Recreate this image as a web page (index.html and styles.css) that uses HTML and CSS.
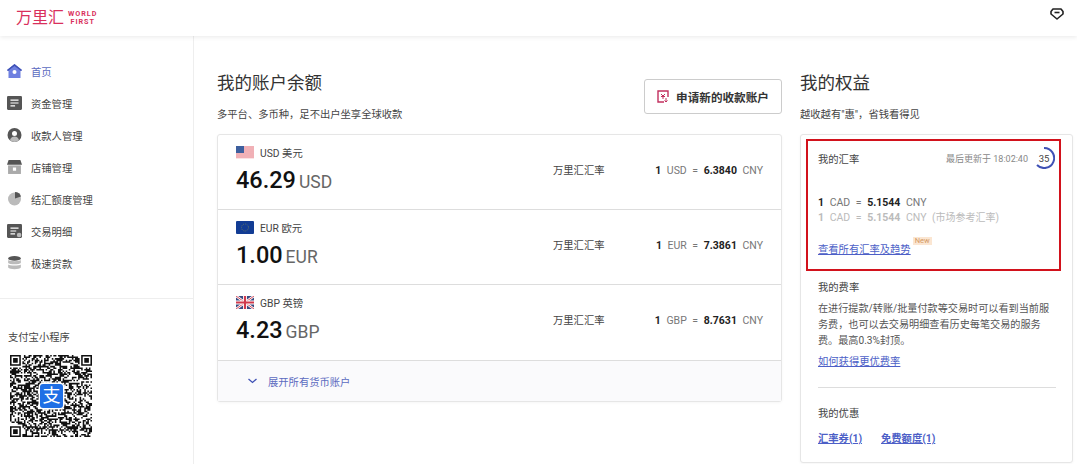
FILE: index.html
```html
<!DOCTYPE html>
<html lang="zh-CN">

<head>
    <meta charset="UTF-8">
    <meta name="viewport" content="width=device-width, initial-scale=1.0">
    <title>万里汇 WorldFirst</title>
    <link rel="stylesheet" href="styles.css">
</head>

<body>
    <header class="topbar">
        <div class="logo">
            <span class="logo-cn">万里汇</span>
            <span class="logo-en">WORLD<br>FIRST</span>
        </div>
        <svg class="gem" width="14" height="12" viewBox="0 0 14 12" fill="none" stroke="#222" stroke-width="1.600">
            <path d="M3 1h8l2 2.500v2.500l-6 5-6-5v-2.500z" stroke-linejoin="round" />
            <path d="M4.500 4.500h5" />
        </svg>
    </header>

    <div class="layout">
        <aside class="sidebar">
            <nav class="nav">
                <a class="nav-item active">
                    <svg width="15" height="14" viewBox="0 0 15 14">
                        <path d="M7.500 0l7.500 6-1 1-.5-.4v7.400h-12v-7.400l-.5.400-1-1z" fill="#6f80e0" />
                        <path d="M7.500 0l7.500 6-1 1-6.500-5-6.500 5-1-1z" fill="#3f51b5" />
                        <circle cx="7.500" cy="8" r="2" fill="#fff" />
                    </svg>
                    首页
                </a>
                <a class="nav-item">
                    <svg width="15" height="14" viewBox="0 0 13 12">
                        <rect width="13" height="12" rx="1" fill="#555" />
                        <path d="M3 3.500h7M3 6h7M3 8.500h4" stroke="#fff" stroke-width="1" />
                    </svg>
                    资金管理
                </a>
                <a class="nav-item">
                    <svg width="15" height="14" viewBox="0 0 14 14">
                        <circle cx="7" cy="7" r="7" fill="#555" />
                        <circle cx="7" cy="5.500" r="2.500" fill="#fff" />
                        <path d="M2.500 12c.8-2.500 2.500-3.500 4.500-3.500s3.700 1 4.500 3.500c-1.200 1.300-2.800 2-4.500 2s-3.300-.7-4.500-2z" fill="#bbb" />
                    </svg>
                    收款人管理
                </a>
                <a class="nav-item">
                    <svg width="15" height="14" viewBox="0 0 14 13">
                        <path d="M1.500 0h11l1.500 4.500h-14z" fill="#555" />
                        <rect x="1" y="5" width="12" height="8" fill="#aaa" />
                        <rect x="5.500" y="7" width="3" height="3" fill="#fff" />
                    </svg>
                    店铺管理
                </a>
                <a class="nav-item">
                    <svg width="15" height="14" viewBox="0 0 14 14">
                        <circle cx="7" cy="7" r="6.500" fill="#bbb" />
                        <path d="M7.500 6.500v-6.500c3 0 5.500 2 6 4.500z" fill="#555" />
                    </svg>
                    结汇额度管理
                </a>
                <a class="nav-item">
                    <svg width="15" height="14" viewBox="0 0 13 12">
                        <rect width="13" height="12" rx="1" fill="#555" />
                        <path d="M3 3.500h7M3 6h5M3 8.500h4" stroke="#fff" stroke-width="1" />
                        <circle cx="10.500" cy="9.500" r="2" fill="#bbb" />
                    </svg>
                    交易明细
                </a>
                <a class="nav-item">
                    <svg width="15" height="14" viewBox="0 0 13 12">
                        <ellipse cx="6.500" cy="2" rx="5.500" ry="2" fill="#555" />
                        <path d="M1 3.500c1 1.300 10 1.300 11 0v2.500c-1 1.500-10 1.500-11 0z" fill="#bbb" />
                        <path d="M1 7.200c1 1.300 10 1.300 11 0v2.800c-1 2-10 2-11 0z" fill="#bbb" />
                    </svg>
                    极速贷款
                </a>
            </nav>
            <div class="mini">
                <p class="mini-title">支付宝小程序</p>
                <div class="qr">
                    <svg id="qr-code" width="82" height="82" viewBox="0 0 53 53"></svg>
                    <span class="qr-logo">支</span>
                </div>
            </div>
        </aside>

        <main class="content">
            <section class="accounts">
                <div class="accounts-head">
                    <div>
                        <h2>我的账户余额</h2>
                        <p class="sub">多平台、多币种，足不出户坐享全球收款</p>
                    </div>
                    <button type="button" class="apply">
                        <svg width="12" height="13" viewBox="0 0 12 13" fill="none" stroke="#c2305f" stroke-width="1.400">
                            <path d="M11 7v-6h-10v11h6" />
                            <path d="M4 4l2 2 2-2M4 6.500h4M6 6v3" stroke-width="1" />
                            <path d="M9 8v4M7.500 10.500l1.500 1.500 1.500-1.500" stroke-width="1" />
                        </svg>
                        申请新的收款账户
                    </button>
                </div>

                <div class="card balances">
                    <div class="balance">
                        <div>
                            <div class="currency">
                                <svg class="flag" viewBox="0 0 18 13">
                                    <rect width="18" height="13" fill="#fbe3e4" />
                                    <path d="M0 1h18M0 3h18M0 5h18M0 7h18M0 9h18M0 11h18" stroke="#e67f88" stroke-width="1" />
                                    <rect width="8" height="7" fill="#3d5f9e" />
                                </svg>
                                USD 美元
                            </div>
                            <div class="amount">46.29<small>USD</small></div>
                        </div>
                        <span class="rate-name">万里汇汇率</span>
                        <span class="rate"><b>1</b> USD = <b>6.3840</b> CNY</span>
                    </div>
                    <div class="balance">
                        <div>
                            <div class="currency">
                                <svg class="flag" viewBox="0 0 18 13">
                                    <rect width="18" height="13" rx="1" fill="#123c94" />
                                    <circle cx="9" cy="6.500" r="3.500" fill="none" stroke="#6f7f5a" stroke-width=".8" stroke-dasharray="1 1" />
                                </svg>
                                EUR 欧元
                            </div>
                            <div class="amount">1.00<small>EUR</small></div>
                        </div>
                        <span class="rate-name">万里汇汇率</span>
                        <span class="rate"><b>1</b> EUR = <b>7.3861</b> CNY</span>
                    </div>
                    <div class="balance last">
                        <div>
                            <div class="currency">
                                <svg class="flag" viewBox="0 0 18 13">
                                    <rect width="18" height="13" fill="#3a4a80" />
                                    <path d="M0 0l18 13M18 0l-18 13" stroke="#fff" stroke-width="2.500" />
                                    <path d="M0 0l18 13M18 0l-18 13" stroke="#d8505f" stroke-width="1" />
                                    <path d="M9 0v13M0 6.500h18" stroke="#fff" stroke-width="4" />
                                    <path d="M9 0v13M0 6.500h18" stroke="#d03a4c" stroke-width="2.200" />
                                </svg>
                                GBP 英镑
                            </div>
                            <div class="amount">4.23<small>GBP</small></div>
                        </div>
                        <span class="rate-name">万里汇汇率</span>
                        <span class="rate"><b>1</b> GBP = <b>8.7631</b> CNY</span>
                    </div>
                    <a class="expand">
                        <svg width="9" height="6" viewBox="0 0 9 6" fill="none" stroke="#3f51b5" stroke-width="1.300">
                            <path d="M.5 1l4 3.500 4-3.500" />
                        </svg>
                        展开所有货币账户
                    </a>
                </div>
            </section>

            <section class="benefits">
                <h2>我的权益</h2>
                <p class="sub">越收越有"惠"，省钱看得见</p>

                <div class="card perks">
                    <div class="my-rate">
                        <div class="my-rate-head">
                            <span>我的汇率</span>
                            <span class="updated">最后更新于 18:02:40</span>
                            <span class="timer">
                                <svg width="22" height="22" viewBox="0 0 22 22" fill="none" stroke="#3f51b5" stroke-width="2">
                                    <path d="M11 1a10 10 0 1 1 -7 17" />
                                </svg>
                                35
                            </span>
                        </div>
                        <div class="rate-lines">
                            <div class="rate"><b>1</b> CAD = <b>5.1544</b> CNY</div>
                            <div class="rate market"><b>1</b> CAD = <b>5.1544</b> CNY <span class="note">(市场参考汇率)</span></div>
                        </div>
                        <div class="trend">
                            <a class="link">查看所有汇率及趋势</a>
                            <span class="badge">New</span>
                        </div>
                    </div>

                    <div class="perk-block fees">
                        <h3>我的费率</h3>
                        <p>在进行提款/转账/批量付款等交易时可以看到当前服务费，也可以去交易明细查看历史每笔交易的服务费。最高0.3%封顶。</p>
                        <a class="link">如何获得更优费率</a>
                    </div>

                    <div class="perk-block offers">
                        <h3>我的优惠</h3>
                        <div class="offer-links">
                            <a class="link strong">汇率券(1)</a>
                            <a class="link strong">免费额度(1)</a>
                        </div>
                    </div>
                </div>
            </section>
        </main>
    </div>

    <script src="script.js"></script>
</body>

</html>
```

FILE: styles.css
```css
* {
    box-sizing: border-box;
}

body {
    margin: 0;
    height: 464px;
    overflow: hidden;
    background-color: #fff;
    color: #444;
    font-family: Roboto, "Noto Sans CJK SC", sans-serif;
    font-size: 10.3px;
}

h2,
h3,
p {
    margin: 0;
    font-weight: 400;
}

.topbar {
    position: relative;
    height: 36px;
    padding: 0 13px 0 16px;
    display: flex;
    justify-content: space-between;
    align-items: center;
    background-color: #fff;
    box-shadow: 0 1px 5px rgba(0, 0, 0, 0.09);
}

.logo {
    display: flex;
    align-items: center;
    gap: 4px;
    color: #d9305c;
}

.logo-cn {
    font-size: 16px;
    line-height: 20px;
}

.logo-en {
    font-size: 7.200px;
    line-height: 8px;
    font-weight: 700;
    letter-spacing: 1px;
    text-align: center;
}

.gem {
    margin-top: -8px;
}

.layout {
    display: flex;
    height: 428px;
}

.sidebar {
    width: 194px;
    flex-shrink: 0;
    border-right: 1px solid #eee;
}

.nav {
    height: 263px;
    padding-top: 19px;
    border-bottom: 1px solid #eee;
}

.nav-item {
    height: 32px;
    padding-left: 7px;
    display: flex;
    align-items: center;
    gap: 9px;
    color: #444;
}

.nav-item.active {
    color: #5c6bc0;
}

.mini {
    padding: 32px 0 0 8px;
}

.mini-title {
    line-height: 14px;
}

.qr {
    position: relative;
    width: 82px;
    height: 82px;
    margin: 10px 0 0 2px;
}

.qr svg {
    display: block;
}

.qr-logo {
    position: absolute;
    left: 30px;
    top: 29px;
    width: 23px;
    height: 24px;
    border-radius: 3px;
    box-shadow: 0 0 0 1.500px #fff;
    background-color: #1f6fe5;
    color: #fff;
    font-size: 18px;
    line-height: 24px;
    text-align: center;
}

.content {
    flex: 1;
    padding: 0 4px 0 23px;
    display: flex;
    gap: 18px;
}

.accounts {
    width: 565px;
    flex-shrink: 0;
}

.accounts-head {
    height: 98px;
    padding-top: 36px;
    display: flex;
    justify-content: space-between;
    align-items: flex-start;
}

h2 {
    font-size: 17.500px;
    line-height: 23px;
    color: #333;
}

.sub {
    margin-top: 13px;
    line-height: 14px;
}

.apply {
    width: 138px;
    height: 35px;
    margin: 7px 0 0;
    padding: 0;
    display: flex;
    justify-content: center;
    align-items: center;
    gap: 7px;
    border: 1px solid #ccc;
    border-radius: 3px;
    background-color: #fff;
    color: #333;
    font-family: inherit;
    font-size: 11.600px;
    font-weight: 700;
}

.card {
    border: 1px solid #e6e6e6;
    border-radius: 3px;
    background-color: #fff;
    box-shadow: 0 1px 3px rgba(0, 0, 0, 0.04);
}

.balance {
    height: 75px;
    padding: 10px 18px 0;
    display: grid;
    grid-template-columns: 317px 1fr auto;
    align-items: start;
    border-bottom: 1px solid #ddd;
}

.balance.last {
    height: 76px;
}

.currency {
    display: flex;
    align-items: center;
    gap: 6px;
    height: 14px;
}

.flag {
    width: 18px;
    height: 13px;
    margin-top: 1px;
}

.amount {
    margin-top: 6px;
    color: #111;
    font-size: 23.500px;
    line-height: 30px;
    font-weight: 500;
}

.amount small {
    margin-left: 3px;
    color: #666;
    font-size: 17.500px;
    font-weight: 400;
}

.rate-name,
.balance .rate {
    margin-top: 19px;
    line-height: 14px;
}

.rate {
    color: #777;
    font-size: 10.500px;
    word-spacing: 3px;
}

.rate b {
    color: #222;
    font-weight: 700;
}

.rate.market,
.rate.market b {
    color: #bbb;
}

.note {
    font-size: 10px;
    word-spacing: 0;
}

.expand {
    height: 40px;
    padding-left: 30px;
    display: flex;
    align-items: center;
    gap: 11px;
    background-color: #fafafc;
    color: #5c6bc0;
}

.benefits {
    width: 273px;
    flex-shrink: 0;
    padding-top: 36px;
}

.benefits .card {
    margin-top: 12px;
}

.perks {
    height: 329px;
    padding: 4px 11px 0 5px;
}

.my-rate {
    height: 132px;
    padding: 6px 4px 0 10px;
    border: 2.500px solid #d2121c;
}

.my-rate-head {
    height: 22px;
    display: flex;
    align-items: center;
}

.updated {
    margin-left: auto;
    color: #888;
    font-size: 9px;
}

.timer {
    position: relative;
    width: 22px;
    height: 22px;
    margin-left: 5px;
    display: flex;
    justify-content: center;
    align-items: center;
    font-size: 9.500px;
}

.timer svg {
    position: absolute;
    left: 0;
    top: 0;
}

.rate-lines {
    margin-top: 26px;
    line-height: 15px;
}

.trend {
    margin-top: 17px;
    display: flex;
    align-items: flex-start;
}

.link {
    color: #4d5fc7;
    font-size: 10.300px;
    line-height: 15px;
    text-decoration: underline;
}

.link.strong {
    font-weight: 700;
}

.badge {
    height: 8px;
    margin: -5px 0 0 2px;
    padding: 0 2px;
    background-color: #fbe6d2;
    color: #d49a66;
    font-size: 7.500px;
    line-height: 8px;
}

.perk-block {
    margin: 0 5px 0 12px;
}

.fees {
    height: 117px;
    padding-top: 10px;
    border-bottom: 1px solid #ddd;
}

h3 {
    font-size: 10.300px;
    line-height: 14px;
}

.fees p {
    max-width: 236px;
    margin-top: 6px;
    line-height: 16px;
    color: #555;
    font-size: 10.150px;
}

.fees .link {
    display: inline-block;
    margin-top: 5px;
}

.offers {
    padding-top: 19px;
}

.offer-links {
    margin-top: 10px;
    display: flex;
    gap: 19px;
}
```

FILE: script.js
```js
// fake the qr pattern, it only has to look like one
var size = 53;
var seed = 7;
var svg = document.getElementById("qr-code");
var d = "";

function next() {
    seed = (seed * 16807) % 2147483647;
    return seed / 2147483647;
}

function inFinder(x, y) {
    var left = x < 8;
    var right = x >= size - 8;
    var top = y < 8;
    var bottom = y >= size - 8;
    return (left && top) || (right && top) || (left && bottom);
}

function finder(x, y) {
    d += "M" + x + " " + y + "h7v7h-7zM" + (x + 1) + " " + (y + 1) + "v5h5v-5z";
    d += "M" + (x + 2) + " " + (y + 2) + "h3v3h-3z";
}

for (var y = 0; y < size; y++) {
    for (var x = 0; x < size; x++) {
        if (!inFinder(x, y) && next() > 0.48) {
            d += "M" + x + " " + y + "h1v1h-1z";
        }
    }
}

finder(0, 0);
finder(size - 7, 0);
finder(0, size - 7);

var path = document.createElementNS("http://www.w3.org/2000/svg", "path");
path.setAttribute("d", d);
path.setAttribute("fill", "#111");
path.setAttribute("fill-rule", "evenodd");
svg.appendChild(path);
```
